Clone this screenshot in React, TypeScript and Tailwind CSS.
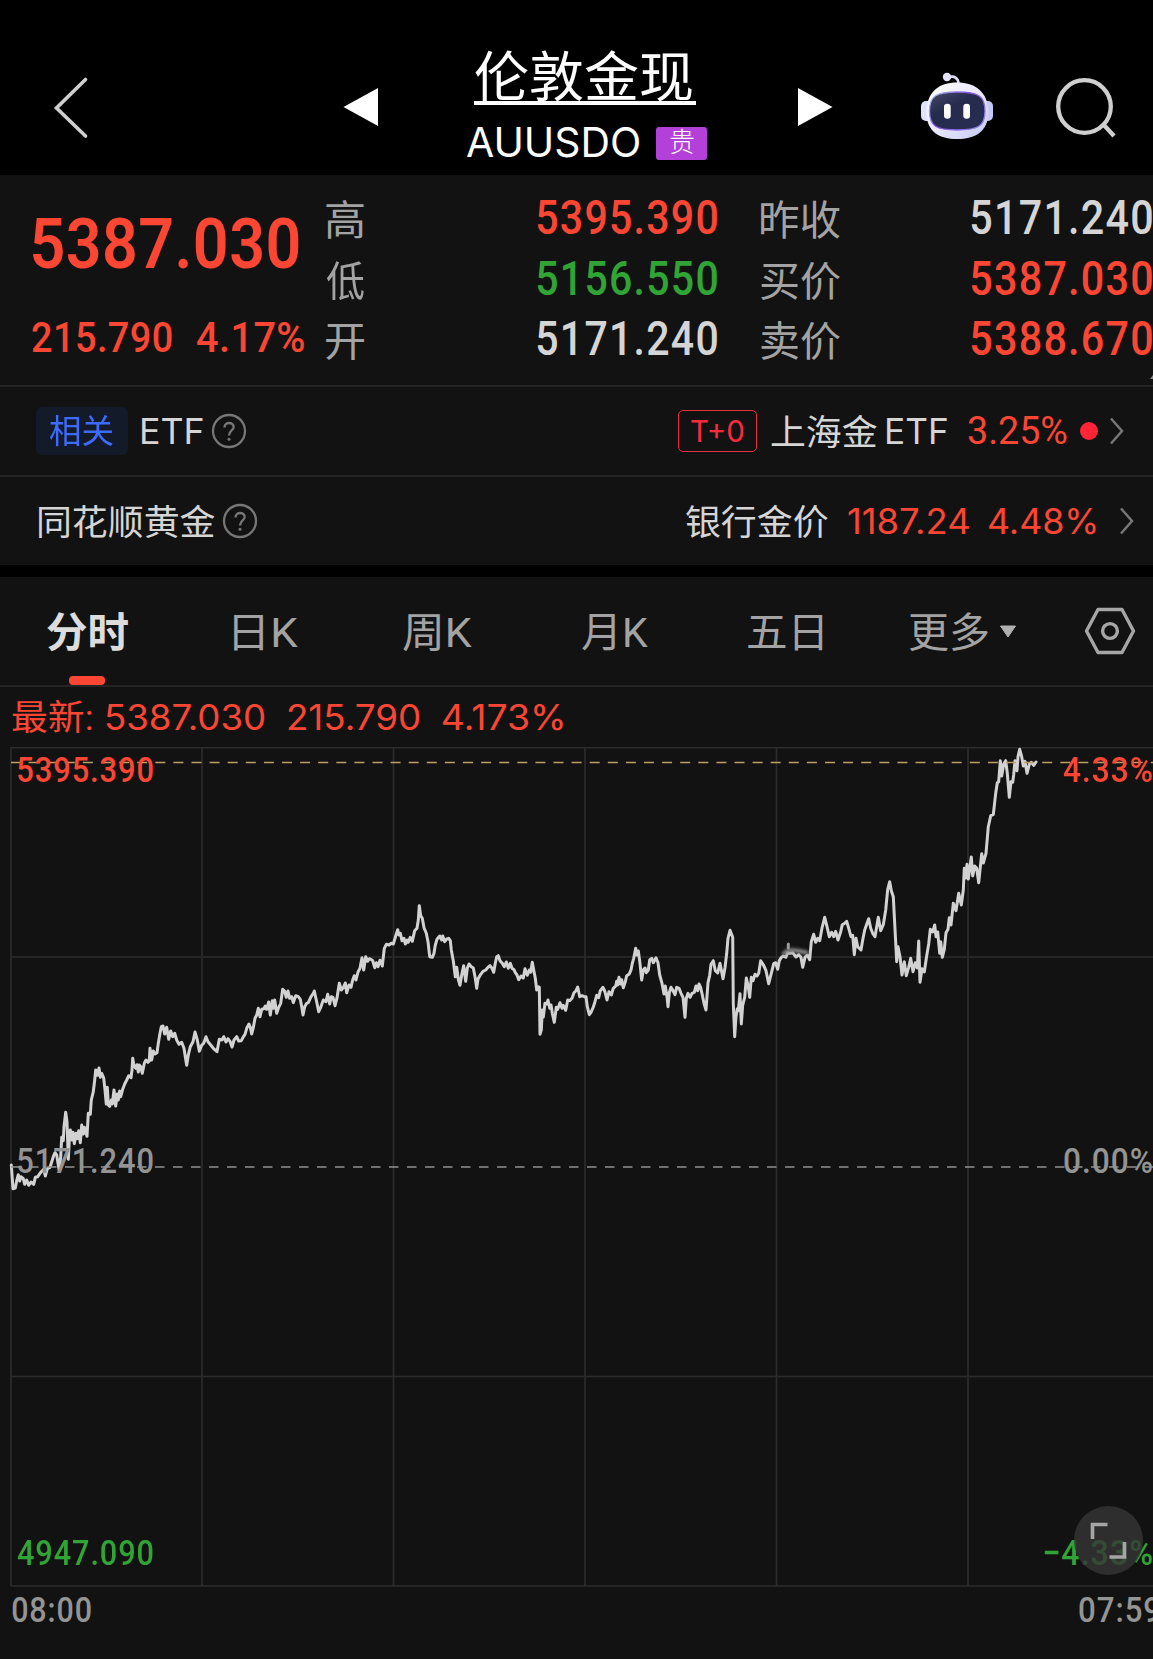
import { useLayoutEffect, useRef, useState } from "react";

const SANS = "font-['Inter','Noto_Sans_CJK_SC',sans-serif]";
const DIN = "font-['Roboto','Noto_Sans_CJK_SC',sans-serif]";

/** Single line of text whose visible glyphs span exactly `w` pixels. */
function Fit({ w, className = "", children }: { w: number; className?: string; children: string }) {
  const ref = useRef<HTMLSpanElement>(null);
  const [t, setT] = useState({ x: 0, s: 1 });
  useLayoutEffect(() => {
    const el = ref.current;
    const ctx = document.createElement("canvas").getContext("2d");
    if (!el || !ctx) return;
    const cs = getComputedStyle(el);
    ctx.font = `${cs.fontWeight} ${cs.fontSize} ${cs.fontFamily}`;
    if (cs.letterSpacing !== "normal") ctx.letterSpacing = cs.letterSpacing;
    const m = ctx.measureText(children);
    const s = w / (m.actualBoundingBoxLeft + m.actualBoundingBoxRight);
    setT({ x: m.actualBoundingBoxLeft * s, s });
  }, [w, children]);
  return (
    <span className={`block shrink-0 whitespace-nowrap ${className}`} style={{ width: w }}>
      <span
        ref={ref}
        className="inline-block origin-left"
        style={{ transform: `translateX(${t.x}px) scaleX(${t.s})` }}
      >
        {children}
      </span>
    </span>
  );
}

function Robot() {
  return (
    <svg className="ml-[88px] mt-[72px] h-[68px] w-[72px] shrink-0" viewBox="0 0 72 68">
      <defs>
        <linearGradient id="shell" x1="0" y1="0" x2="1" y2="1">
          <stop offset="0" stopColor="#ffffff" />
          <stop offset="0.5" stopColor="#ebe8fb" />
          <stop offset="1" stopColor="#c3c8f4" />
        </linearGradient>
        <linearGradient id="rim" x1="0" y1="0" x2="1" y2="0.6">
          <stop offset="0" stopColor="#a9d0ee" />
          <stop offset="0.5" stopColor="#8a55e0" />
          <stop offset="1" stopColor="#8f7cf0" />
        </linearGradient>
        <linearGradient id="face" x1="0" y1="0" x2="0.7" y2="1">
          <stop offset="0" stopColor="#46486a" />
          <stop offset="0.45" stopColor="#252b4c" />
          <stop offset="1" stopColor="#262d52" />
        </linearGradient>
      </defs>
      <path d="M27 5.500C33 3 37.500 6 37.500 12" fill="none" stroke="#dcdcf6" strokeWidth="2.600" />
      <circle cx="26" cy="5" r="4.200" fill="#e4e2fa" />
      <rect x="0" y="29" width="12" height="20" rx="5" fill="#e0e3fb" />
      <rect x="60" y="29" width="12" height="20" rx="5" fill="#c5c9f5" />
      <path d="M36 10.500C54 10.500 67.300 20 67.300 40C67.300 60 54 67 36 67C18 67 5.500 60 5.500 40C5.500 20 18 10.500 36 10.500Z" fill="url(#shell)" />
      <path d="M36 20C57 20 64 23.500 64 39C64 54.500 57 58 36 58C15.500 58 8.500 54.500 8.500 39C8.500 23.500 15.500 20 36 20Z" fill="url(#face)" stroke="url(#rim)" strokeWidth="1.300" />
      <rect x="23" y="31.700" width="6.700" height="15" rx="3.300" fill="#fff" />
      <rect x="42.300" y="31.700" width="6.700" height="15" rx="3.300" fill="#fff" />
    </svg>
  );
}

function Header() {
  return (
    <header className="flex h-[175px] items-start bg-black">
      <svg className="ml-[52px] mt-[76px] h-[64px] w-[40px] shrink-0" viewBox="0 0 40 64">
        <path d="M33.500 3.500L4.500 32L33.500 60" fill="none" stroke="#cfcfcf" strokeWidth="3.600" strokeLinecap="round" />
      </svg>
      <svg className="ml-[251px] mt-[88px] h-[38px] w-[35px] shrink-0" viewBox="0 0 35 38">
        <path d="M35 0V38L0.500 19Z" fill="#fff" />
      </svg>
      <div className="ml-[89px] mt-[44px] w-[240px] shrink-0 text-white">
        <div className="ml-[7px] h-[61px] w-[222px] border-b-4 border-white pt-[2px]">
          <Fit w={217} className={`${DIN} ml-px text-[54px] leading-[66px]`}>伦敦金现</Fit>
        </div>
        <div className="mt-[22px] flex items-start">
          <Fit w={172} className={`${SANS} text-[41px] leading-[31px]`}>AUUSDO</Fit>
          <div className="ml-[17px] flex h-[33px] w-[51px] items-center justify-center rounded-[3px] bg-[#b340d9]">
            <Fit w={24} className={`${DIN} text-[27px] font-light leading-[37px]`}>贵</Fit>
          </div>
        </div>
      </div>
      <svg className="ml-[91px] mt-[88px] h-[38px] w-[35px] shrink-0" viewBox="0 0 35 38">
        <path d="M0 0V38L34.500 19Z" fill="#fff" />
      </svg>
      <Robot />
      <svg className="ml-[61px] mt-[76px] h-[64px] w-[64px] shrink-0" viewBox="0 0 64 64">
        <circle cx="30.500" cy="30.500" r="26.300" fill="none" stroke="#cfcfcf" strokeWidth="4.300" />
        <path d="M49 48L60 60" stroke="#cfcfcf" strokeWidth="4.300" />
      </svg>
    </header>
  );
}

const RED = "text-[#fb4634]";
const GREEN = "text-[#31a436]";
const LIGHT = "text-[#d5d5d5]";

const quotes = [
  { a: "高", av: "5395.390", ac: RED, b: "昨收", bv: "5171.240", bc: LIGHT },
  { a: "低", av: "5156.550", ac: GREEN, b: "买价", bv: "5387.030", bc: RED },
  { a: "开", av: "5171.240", ac: LIGHT, b: "卖价", bv: "5388.670", bc: RED },
];

function Quote() {
  return (
    <section className="relative flex h-[212px] border-b-2 border-[#242424]">
      <div className={`ml-[32px] w-[294px] shrink-0 tracking-[0.03em] ${RED} ${DIN}`}>
        <Fit w={266} className="ml-px mt-[34px] text-[71px] font-semibold leading-[70px]">5387.030</Fit>
        <div className="mt-[32px] flex text-[43px] font-medium leading-[52px]">
          <Fit w={140}>215.790</Fit>
          <Fit w={107} className="ml-[25px]">4.17%</Fit>
        </div>
      </div>
      <div className={`mt-[13px] flex-1 ${DIN}`}>
        {quotes.map((q) => (
          <div key={q.a} className="flex h-[60.500px] items-center leading-[60px]">
            <Fit w={38} className="mt-[6px] text-[41px] text-[#a3a3a3]">{q.a}</Fit>
            <Fit w={180} className={`ml-[173px] text-[47.500px] font-medium tracking-[0.03em] ${q.ac}`}>{q.av}</Fit>
            <Fit w={79} className="ml-[44px] mt-[6px] text-[41px] text-[#a3a3a3]">{q.b}</Fit>
            <Fit w={181} className={`ml-[131px] text-[47.500px] font-medium tracking-[0.03em] ${q.bc}`}>{q.bv}</Fit>
          </div>
        ))}
      </div>
      <svg className="absolute bottom-[6px] right-0 h-[4px] w-[3px]" viewBox="0 0 3 4">
        <path d="M3 0V4H0Z" fill="#8a8a8a" />
      </svg>
    </section>
  );
}

function Help({ className }: { className: string }) {
  return (
    <svg className={`h-[36px] w-[36px] shrink-0 ${className}`} viewBox="0 0 36 36" fill="none" stroke="#777">
      <circle cx="18" cy="18" r="16" strokeWidth="2.300" />
      <path d="M13.500 14.500C13.500 8.500 22.700 8.700 22.700 14C22.700 17.500 18 17.500 18 22.500" strokeWidth="2.300" />
      <circle cx="18" cy="26.200" r="1.500" fill="#777" stroke="none" />
    </svg>
  );
}

function Chevron({ className }: { className: string }) {
  return (
    <svg className={`h-[30px] w-[15px] shrink-0 ${className}`} viewBox="0 0 15 30">
      <path d="M2 2.500L13 15L2 27.500" fill="none" stroke="#777" strokeWidth="2.500" />
    </svg>
  );
}

function Related() {
  return (
    <>
      <section className={`flex h-[90px] items-center border-b-2 border-[#242424] pb-px leading-[50px] ${LIGHT} ${DIN}`}>
        <div className="ml-[36px] flex h-[48px] w-[92px] shrink-0 items-center justify-center rounded-md bg-[#131a29]">
          <Fit w={64} className="mr-[2px] mt-[2px] text-[33px] text-[#3d6bff]">相关</Fit>
        </div>
        <Fit w={61} className={`${SANS} ml-[14px] text-[35px]`}>ETF</Fit>
        <Help className="ml-[8px]" />
        <div className="ml-[431px] flex h-[42px] w-[79px] shrink-0 items-center justify-center rounded-[5px] border border-[#e8303e] text-[#fb2b3e]">
          <Fit w={53} className={`${SANS} text-[30px]`}>T+0</Fit>
        </div>
        <Fit w={106} className="ml-[14px] mt-[4px] text-[35.500px]">上海金</Fit>
        <Fit w={60} className={`${SANS} ml-[10px] text-[35px]`}>ETF</Fit>
        <Fit w={99} className={`ml-[21px] text-[38px] ${RED}`}>3.25%</Fit>
        <div className="ml-[13px] h-[18px] w-[18px] shrink-0 rounded-full bg-[#ff2436]" />
        <Chevron className="ml-[11px]" />
      </section>
      <section className={`flex h-[88px] items-center leading-[50px] ${LIGHT} ${DIN}`}>
        <Fit w={176} className="ml-[39px] mt-[3px] text-[35.500px]">同花顺黄金</Fit>
        <Help className="ml-[7px]" />
        <Fit w={142} className="ml-[428px] mt-[3px] text-[35.500px]">银行金价</Fit>
        <Fit w={121} className={`${SANS} ml-[20px] text-[35px] ${RED}`}>1187.24</Fit>
        <Fit w={107} className={`${SANS} ml-[20px] text-[35px] ${RED}`}>4.48%</Fit>
        <Chevron className="ml-[23px]" />
      </section>
    </>
  );
}

function Tabs() {
  return (
    <nav className={`flex h-[110px] items-center border-b-2 border-[#242424] text-[41px] leading-[60px] text-[#a3a3a3] ${DIN}`}>
      <div className="relative ml-[47px] mt-[4px] font-bold text-[#dcdcdc]">
        <Fit w={81}>分时</Fit>
        <div className="absolute -bottom-[22px] left-[22px] h-[9px] w-[36px] rounded-[4px] bg-[#fb4634]" />
      </div>
      <Fit w={64} className="ml-[106px] mt-[3px]">日K</Fit>
      <Fit w={69} className="ml-[105px] mt-[3px]">周K</Fit>
      <Fit w={66} className="ml-[110px] mt-[3px]">月K</Fit>
      <Fit w={75} className="ml-[100px] mt-[3px]">五日</Fit>
      <Fit w={79} className="ml-[86px] mt-[3px]">更多</Fit>
      <svg className="ml-[11px] h-[13px] w-[18px] shrink-0" viewBox="0 0 18 13">
        <path d="M1.500 1H16.500L9 12Z" fill="#b0b0b0" stroke="#b0b0b0" strokeLinejoin="round" />
      </svg>
      <svg className="ml-[67px] h-[50px] w-[52px] shrink-0" viewBox="0 0 52 50" fill="none" stroke="#a6a6a6" strokeWidth="3.400">
        <path d="M14 3.500H38L49.500 25L38 46.500H14L2.500 25Z" strokeLinejoin="round" />
        <circle cx="26" cy="25" r="7.400" />
      </svg>
    </nav>
  );
}

type Pt = [number, number];

// Intraday samples, three units per pixel, each block relative to its own origin.
const blocks: { ox: number; oy: number; pts: Pt[] }[] = [
  {
    ox: 0,
    oy: 900,
    pts: [[34,795],[39,866],[46,864],[50,842],[55,824],[59,843],[63,830],[70,836],[74,853],[80,840],[86,856],[93,846],[101,853],[106,832],[113,830],[120,820],[126,813],[131,808],[136,828],[142,806],[150,802],[154,790],[160,770],[165,758],[170,765],[174,790],[178,812],[182,770],[185,712],[190,722],[192,680],[197,637],[201,665],[205,778],[208,720],[211,690],[216,720],[219,697],[223,731],[228,700],[231,716],[236,692],[241,728],[245,675],[250,702],[253,682],[261,709],[265,640],[271,643],[274,600],[280,575],[284,540],[287,510],[292,526],[297,504],[301,532],[305,520],[311,534],[315,570],[319,612],[322,562],[325,615],[329,619],[334,600],[337,612],[342,570],[347,618],[352,582],[355,600],[359,573],[362,590],[368,568],[374,552],[380,540],[386,527],[393,533],[396,510],[398,475],[402,497],[407,505],[411,494],[415,516],[418,495],[422,500],[427,520],[433,490],[438,480],[444,487],[448,482],[450,445],[455,480],[460,453],[465,462],[471,458],[475,430],[480,400],[484,380],[489,378],[494,402],[500,382],[506,418],[512,393],[518,410],[524,400],[530,420],[537,433],[545,427],[552,445],[556,470],[560,496],[565,465],[571,440],[579,425],[585,396],[592,420],[598,454],[605,436],[611,430],[618,410],[624,425],[632,435],[640,445],[651,455],[658,418],[666,420],[671,410],[678,426],[684,416],[690,424],[696,441],[702,420],[710,410],[716,423],[724,422],[729,412],[735,403],[740,385],[747,372],[751,382],[755,402],[760,383],[765,355],[770,345],[775,325],[780,350],[785,328],[792,326],[796,318],[800,328],[806,306],[811,345],[817,302],[821,325],[824,300],[830,340],[836,322],[842,310],[848,268],[854,274],[859,292],[864,273],[869,295],[875,290],[880,308],[887,287],[895,290],[901,298],[905,320],[909,345],[914,320],[920,310],[925,308],[932,292],[940,280],[943,273],[949,300],[956,335],[962,322],[970,300],[978,305],[983,283],[989,312],[994,290],[999,292],[1005,317],[1011,294],[1018,250],[1024,270],[1030,263],[1036,249],[1040,278],[1047,255],[1053,262],[1058,240],[1063,227],[1068,240],[1074,216],[1080,205],[1086,173],[1091,210],[1097,170],[1103,184],[1108,176],[1113,178],[1118,182],[1124,203],[1129,188],[1134,200],[1140,181],[1147,198],[1153,145],[1159,133],[1167,135],[1173,130],[1180,132],[1187,108],[1193,89]],
  },
  {
    ox: 380,
    oy: 880,
    pts: [[53,150],[57,165],[61,160],[66,182],[72,175],[76,192],[82,180],[85,187],[91,172],[97,184],[104,152],[111,145],[115,120],[118,77],[122,107],[127,115],[132,143],[139,160],[144,185],[149,230],[157,232],[162,220],[166,195],[171,178],[179,168],[185,180],[188,168],[194,185],[200,177],[206,175],[211,182],[214,210],[220,243],[226,290],[230,262],[235,298],[240,316],[246,280],[251,257],[257,304],[262,265],[267,252],[274,260],[280,264],[286,295],[290,325],[294,297],[302,283],[309,274],[317,270],[323,263],[330,257],[335,263],[341,277],[346,250],[350,230],[355,227],[360,242],[367,250],[373,260],[379,246],[385,265],[391,250],[396,265],[402,269],[406,278],[411,285],[416,299],[423,288],[430,294],[435,266],[442,286],[448,270],[452,277],[457,247],[461,270],[466,295],[470,330],[475,320],[478,322],[480,463],[484,450],[487,390],[490,411],[495,370],[500,372],[504,360],[509,385],[513,375],[517,400],[523,427],[529,382],[533,388],[540,368],[546,385],[550,376],[557,391],[563,360],[569,362],[576,355],[582,338],[588,332],[593,321],[599,350],[606,347],[613,350],[618,350],[622,380],[628,404],[633,397],[640,381],[645,365],[650,346],[656,353],[661,332],[669,322],[674,333],[681,360],[687,335],[694,345],[700,325],[707,318],[710,304],[713,315],[717,292],[721,312],[725,299],[730,323],[736,305],[740,287],[747,283],[753,270],[757,250],[761,235],[767,205],[770,225],[775,213],[780,250],[785,300],[790,270],[795,264],[799,278],[805,270],[809,240],[815,235],[820,248],[828,233],[834,248],[839,285],[846,310],[852,342],[856,318],[861,350],[864,380],[868,338],[873,322],[878,330],[885,344],[890,322],[897,325],[903,340],[909,352],[915,412],[919,355],[924,340],[930,352],[936,340],[943,337],[948,318],[953,332],[957,312],[962,323],[967,345],[972,370],[978,390],[984,308],[989,286],[993,253],[1000,242],[1006,272],[1013,279],[1020,250],[1029,296],[1035,263],[1040,220],[1044,175],[1050,151],[1058,172],[1060,370],[1064,470],[1068,410],[1072,386],[1075,392],[1080,341],[1084,432],[1088,375],[1094,352],[1099,294],[1105,320],[1109,352],[1114,292],[1119,302],[1125,283],[1131,288]],
  },
  {
    ox: 700,
    oy: 730,
    pts: [[176,730],[182,692],[190,704],[198,722],[206,761],[214,730],[221,701],[227,698],[233,718],[238,692],[243,683],[250,678],[257,682],[263,668],[270,670],[278,668],[288,681],[296,674],[303,682],[308,712],[315,682],[322,675],[329,689],[334,635],[341,613],[347,637],[353,625],[359,632],[366,594],[374,562],[381,590],[388,620],[395,607],[401,620],[407,604],[414,630],[422,605],[427,584],[434,580],[440,574],[447,598],[453,620],[458,616],[463,674],[468,625],[473,650],[483,660],[488,630],[494,600],[500,583],[506,566],[512,595],[518,610],[525,620],[530,590],[535,562],[542,602],[550,584],[557,540],[563,478],[569,455],[574,482],[580,500],[584,580],[590,695],[594,650],[600,680],[606,735],[613,695],[619,737],[626,712],[632,685],[639,725],[646,698],[652,714],[656,633],[660,757],[666,716],[673,726],[680,677],[686,642],[691,598],[698,606],[704,585],[708,620],[713,606],[719,670],[722,635],[727,682],[733,658],[738,608],[744,598],[748,563],[753,585],[760,520],[768,542],[776,490],[784,525],[790,480],[793,415],[797,444],[801,403],[805,447],[814,381],[818,438],[824,408],[830,415],[836,458],[845,371],[850,399],[858,370],[865,290],[872,257],[880,254],[887,190],[892,158],[896,155],[901,92],[905,138],[911,102],[917,92],[922,130],[928,202],[933,155],[938,157],[941,134],[945,92],[951,122],[954,80],[959,58],[965,80],[970,108],[975,94],[981,130],[988,103],[994,97],[1001,106],[1008,96]],
  },
];

const W = 1153;
const TOP = 747;
const line = blocks
  .flatMap((b) => b.pts.map(([x, y]) => `${(b.ox + x / 3).toFixed(1)},${(b.oy + y / 3 - TOP).toFixed(1)}`))
  .join(" ");

function Chart() {
  return (
    <section className={`relative h-[841px] ${DIN}`}>
      <svg className="block h-[841px] w-full" viewBox={`0 0 ${W} 841`} fill="none">
        <defs>
          <filter id="soft" x="-50%" y="-100%" width="200%" height="300%">
            <feGaussianBlur stdDeviation="1.800" />
          </filter>
        </defs>
        <g stroke="#2c2c2c" strokeWidth="1.700">
          <path d="M11 0.700H1153M11 210H1153M11 629.500H1153M11 839H1153" />
          <path d="M11 0V839M202 0V839M393.500 0V839M585 0V839M776.500 0V839M968 0V839" />
        </g>
        <polyline points={line} stroke="#d2d2d2" strokeWidth="3" strokeLinejoin="round" strokeLinecap="round" />
        <path d="M11 15.600H1153" stroke="#bda069" strokeWidth="1.500" strokeDasharray="10 8.100" strokeDashoffset="0.500" />
        <path d="M11 420H1153" stroke="#919191" strokeWidth="1.700" strokeDasharray="9.500 8.500" />
        <path d="M783 208C787 201 796 203 808 206" stroke="#8a8a8a" strokeWidth="4" filter="url(#soft)" />
        <path d="M788.300 197V201" stroke="#9a9a9a" strokeWidth="3" strokeLinecap="round" />
      </svg>
      <div className="absolute inset-0 overflow-hidden text-[35.500px] font-medium leading-[40px] tracking-[0.03em]">
        <Fit w={135} className={`absolute left-[18px] top-[3px] ${RED}`}>5395.390</Fit>
        <Fit w={89} className={`absolute left-[1063px] top-[3px] ${RED}`}>4.33%</Fit>
        <Fit w={135} className="absolute left-[18px] top-[394px] text-[#949494]">5171.240</Fit>
        <Fit w={88} className="absolute left-[1064px] top-[394px] text-[#949494]">0.00%</Fit>
        <Fit w={136} className={`absolute left-[17px] top-[786px] ${GREEN}`}>4947.090</Fit>
        <Fit w={108} className={`absolute left-[1044px] top-[786px] ${GREEN}`}>−4.33%</Fit>
      </div>
      <button className="absolute left-[1074px] top-[759px] h-[69px] w-[69px] rounded-full bg-[#363636]/80">
        <svg className="h-[69px] w-[69px]" viewBox="0 0 69 69" fill="none" stroke="#a5a5a5" strokeWidth="3.600">
          <path d="M18.500 33V18.500H33.500M50.500 36V51H35.500" />
        </svg>
      </button>
    </section>
  );
}

export default function App() {
  return (
    <main className="h-[1659px] w-[1153px] overflow-hidden bg-[#121212]">
      <Header />
      <Quote />
      <Related />
      <div className="h-[12px] bg-black" />
      <Tabs />
      <div className={`flex h-[60px] items-center text-[35px] leading-[50px] ${RED} ${SANS}`}>
        <Fit w={80} className={DIN + " ml-[12px] mt-[4px]"}>最新:</Fit>
        <Fit w={158} className="ml-[14px]">5387.030</Fit>
        <Fit w={131} className="ml-[24px]">215.790</Fit>
        <Fit w={120} className="ml-[24px]">4.173%</Fit>
      </div>
      <Chart />
      <div className={`flex h-[44px] w-[1165px] justify-between pl-[12px] pr-[5px] text-[35.500px] font-medium leading-[44px] tracking-[0.03em] text-[#949494] ${DIN}`}>
        <Fit w={79}>08:00</Fit>
        <Fit w={81}>07:59</Fit>
      </div>
    </main>
  );
}
